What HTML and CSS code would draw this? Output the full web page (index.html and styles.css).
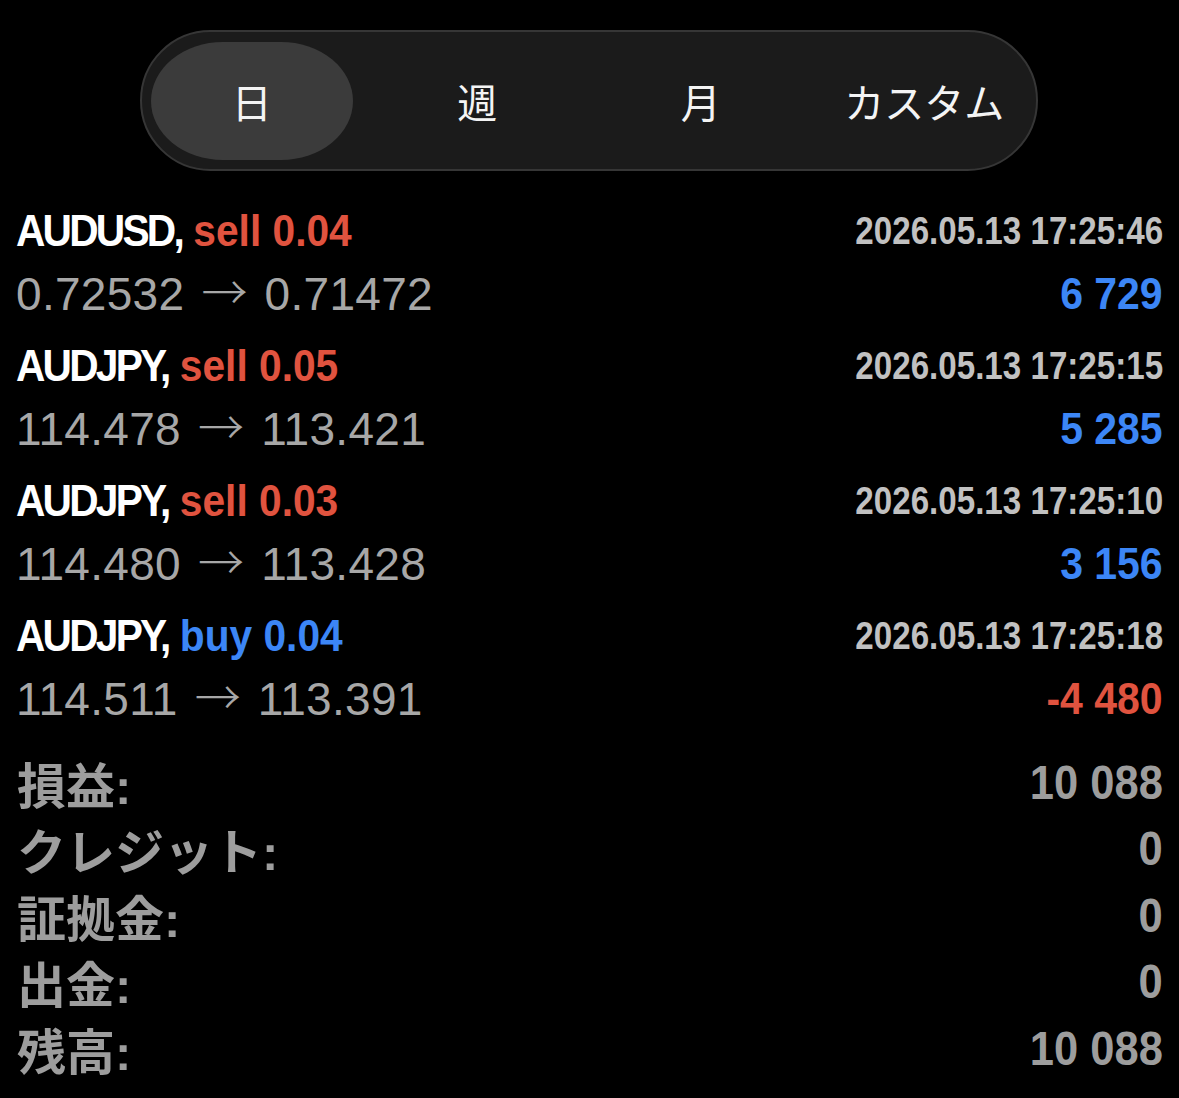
FILE: index.html
```html
<!DOCTYPE html>
<html lang="ja">
<head>
<meta charset="utf-8">
<title>履歴</title>
<link rel="stylesheet" href="styles.css">
</head>
<body>
<div class="tabs">
  <div class="tab active"><span>日</span></div>
  <div class="tab"><span>週</span></div>
  <div class="tab"><span>月</span></div>
  <div class="tab"><span>カスタム</span></div>
</div>

<div class="deals">
  <div class="deal">
    <div class="line head">
      <span class="title"><span class="sym">AUDUSD,</span> <span class="sell">sell 0.04</span></span>
      <span class="date">2026.05.13 17:25:46</span>
    </div>
    <div class="line body">
      <span class="prices">0.72532 <span class="arrow">→</span> 0.71472</span>
      <span class="pnl plus">6 729</span>
    </div>
  </div>
  <div class="deal">
    <div class="line head">
      <span class="title"><span class="sym">AUDJPY,</span> <span class="sell">sell 0.05</span></span>
      <span class="date">2026.05.13 17:25:15</span>
    </div>
    <div class="line body">
      <span class="prices">114.478 <span class="arrow">→</span> 113.421</span>
      <span class="pnl plus">5 285</span>
    </div>
  </div>
  <div class="deal">
    <div class="line head">
      <span class="title"><span class="sym">AUDJPY,</span> <span class="sell">sell 0.03</span></span>
      <span class="date">2026.05.13 17:25:10</span>
    </div>
    <div class="line body">
      <span class="prices">114.480 <span class="arrow">→</span> 113.428</span>
      <span class="pnl plus">3 156</span>
    </div>
  </div>
  <div class="deal">
    <div class="line head">
      <span class="title"><span class="sym">AUDJPY,</span> <span class="buy">buy 0.04</span></span>
      <span class="date">2026.05.13 17:25:18</span>
    </div>
    <div class="line body">
      <span class="prices">114.511 <span class="arrow">→</span> 113.391</span>
      <span class="pnl minus">-4 480</span>
    </div>
  </div>
</div>

<div class="summary">
  <div class="sum-row"><span class="sum-label">損益:</span><span class="sum-val">10 088</span></div>
  <div class="sum-row"><span class="sum-label">クレジット:</span><span class="sum-val">0</span></div>
  <div class="sum-row"><span class="sum-label">証拠金:</span><span class="sum-val">0</span></div>
  <div class="sum-row"><span class="sum-label">出金:</span><span class="sum-val">0</span></div>
  <div class="sum-row"><span class="sum-label">残高:</span><span class="sum-val">10 088</span></div>
</div>
</body>
</html>
```
FILE: styles.css
```css
html, body {
  margin: 0;
  padding: 0;
  background: #000;
}
body {
  font-family: "Liberation Sans", "Noto Sans CJK JP", sans-serif;
  color: #fff;
  width: 1179px;
  height: 1098px;
  overflow: hidden;
}

/* segmented control */
.tabs {
  margin: 30px 141px 0 140px;
  height: 141px;
  box-sizing: border-box;
  border: 2px solid #363636;
  border-radius: 71px;
  background: #1b1b1b;
  display: grid;
  grid-template-columns: repeat(4, 1fr);
}
.tab {
  display: flex;
  align-items: center;
  justify-content: center;
  font-family: "Noto Sans CJK JP", sans-serif;
  font-size: 40px;
  color: #f4f4f4;
}
.tab.active {
  margin: 10px 13px 9px 9px;
  background: #3b3b3b;
  border-radius: 72px / 59px;
}

/* deals */
.deals {
  margin-top: 30px;
  padding: 0 16px;
}
.deal {
  margin-bottom: 9px;
}
.line {
  display: flex;
  justify-content: space-between;
  align-items: center;
  white-space: nowrap;
}
.head {
  height: 60px;
}
.body {
  height: 66px;
}
.title {
  display: inline-block;
  font-weight: 700;
  font-size: 44px;
  transform: scaleX(0.925);
  transform-origin: left center;
}
.sym {
  color: #fff;
  letter-spacing: -3px;
}
.sell {
  color: #e0533f;
}
.buy {
  color: #3c86f6;
}
.date {
  display: inline-block;
  font-weight: 700;
  font-size: 39px;
  color: #c1c1c1;
  transform: scaleX(0.85);
  transform-origin: right center;
}
.prices {
  font-size: 46px;
  line-height: 52px;
  color: #a7a7a7;
  letter-spacing: 0.3px;
  word-spacing: 4px;
}
.arrow {
  font-family: "Noto Sans CJK JP", sans-serif;
  font-weight: 300;
  font-size: 46px;
  line-height: 0;
  letter-spacing: 0;
  position: relative;
  top: -1px;
}
.pnl {
  display: inline-block;
  font-weight: 700;
  font-size: 45px;
  transform: scaleX(0.91);
  transform-origin: right center;
}
.pnl.plus {
  color: #3c86f6;
}
.pnl.minus {
  color: #e0533f;
}

/* summary */
.summary {
  margin-top: 17px;
  padding: 0 16px 0 17px;
  color: #9d9d9d;
  font-weight: 700;
}
.sum-row {
  height: 66.5px;
  display: flex;
  justify-content: space-between;
  align-items: center;
}
.sum-label {
  font-size: 49px;
}
.sum-val {
  display: inline-block;
  font-size: 48px;
  transform: scaleX(0.906);
  transform-origin: right center;
}
```
